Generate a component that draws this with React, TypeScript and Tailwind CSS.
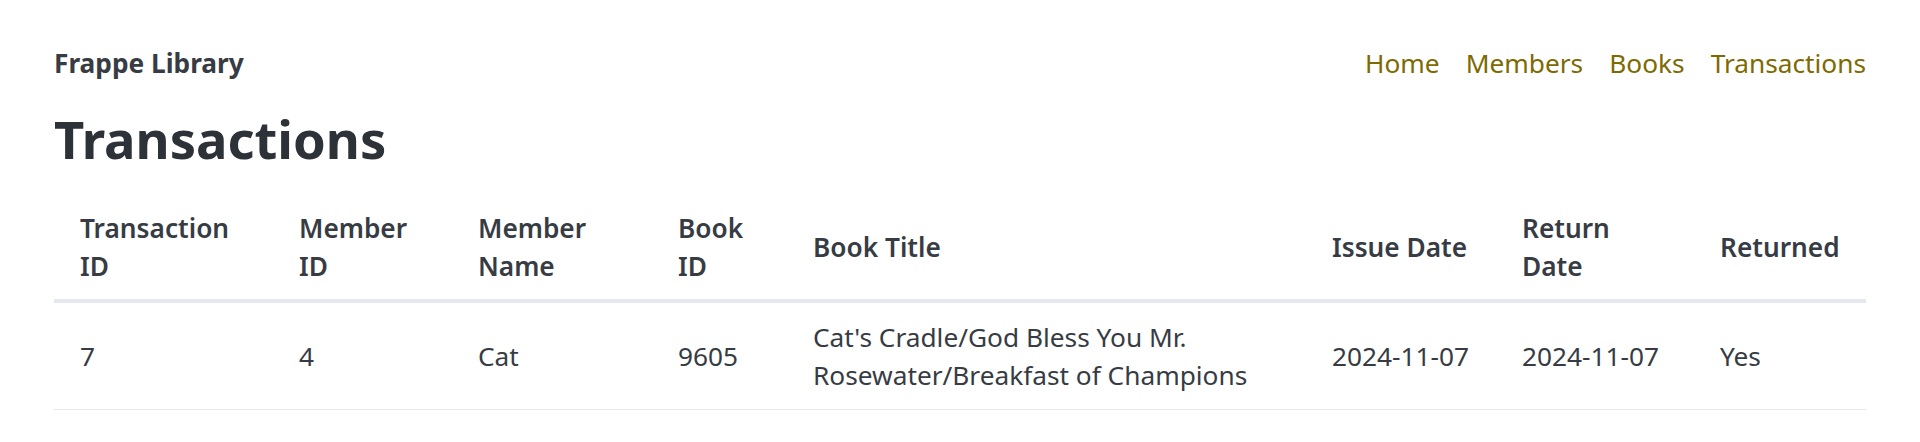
import React from 'react';

// Single transaction row shown in the list
const TRANSACTIONS = [
    {
        id: 7,
        memberId: 4,
        memberName: 'Cat',
        bookId: 9605,
        title: "Cat's Cradle/God Bless You Mr. Rosewater/Breakfast of Champions",
        issueDate: '2024-11-07',
        returnDate: '2024-11-07',
        returned: 'Yes',
    },
];

const NAV_LINKS = ['Home', 'Members', 'Books', 'Transactions'];

const thClass = 'px-[26px] py-[13px] text-left align-middle font-semibold leading-[38.4px] border-b-[4px] border-[#e5e8ee]';
const tdClass = 'px-[26px] pt-[15px] pb-[14px] align-middle leading-[38.4px] border-b border-[#e6e8ec]';

const App: React.FC = () => {
    return (
        <div
            className="min-h-screen bg-white px-[54px] pt-[44px] text-[26.25px] text-[#373c44]"
            style={{ fontFamily: '"Noto Sans", "Open Sans", sans-serif' }}
        >
            <nav className="flex h-[38.4px] items-center justify-between leading-[38.4px]">
                <span className="font-bold text-[#373c44]">Frappe Library</span>
                <ul className="flex items-center gap-[26px]">
                    {NAV_LINKS.map((link) => (
                        <li key={link}>
                            <a href="#" className="text-[#7d6a00]">{link}</a>
                        </li>
                    ))}
                </ul>
            </nav>

            <h1 className="mt-[28px] text-[52.5px] font-bold leading-[57.6px] text-[#2d3138]">Transactions</h1>

            <table className="mt-[28px] w-full table-fixed border-collapse">
                <thead>
                    <tr>
                        <th className={`${thClass} w-[219px]`}>Transaction ID</th>
                        <th className={`${thClass} w-[179px]`}>Member ID</th>
                        <th className={`${thClass} w-[200px]`}>Member Name</th>
                        <th className={`${thClass} w-[135px]`}>Book ID</th>
                        <th className={`${thClass} w-[519px]`}>Book Title</th>
                        <th className={`${thClass} w-[190px] whitespace-nowrap`}>Issue Date</th>
                        <th className={`${thClass} w-[198px]`}>Return Date</th>
                        <th className={`${thClass} w-[172px] whitespace-nowrap`}>Returned</th>
                    </tr>
                </thead>
                <tbody>
                    {TRANSACTIONS.map((t) => (
                        <tr key={t.id}>
                            <td className={tdClass}>{t.id}</td>
                            <td className={tdClass}>{t.memberId}</td>
                            <td className={tdClass}>{t.memberName}</td>
                            <td className={tdClass}>{t.bookId}</td>
                            <td className={tdClass}>{t.title}</td>
                            <td className={`${tdClass} whitespace-nowrap`}>{t.issueDate}</td>
                            <td className={`${tdClass} whitespace-nowrap`}>{t.returnDate}</td>
                            <td className={tdClass}>{t.returned}</td>
                        </tr>
                    ))}
                </tbody>
            </table>
        </div>
    );
};

export default App;
